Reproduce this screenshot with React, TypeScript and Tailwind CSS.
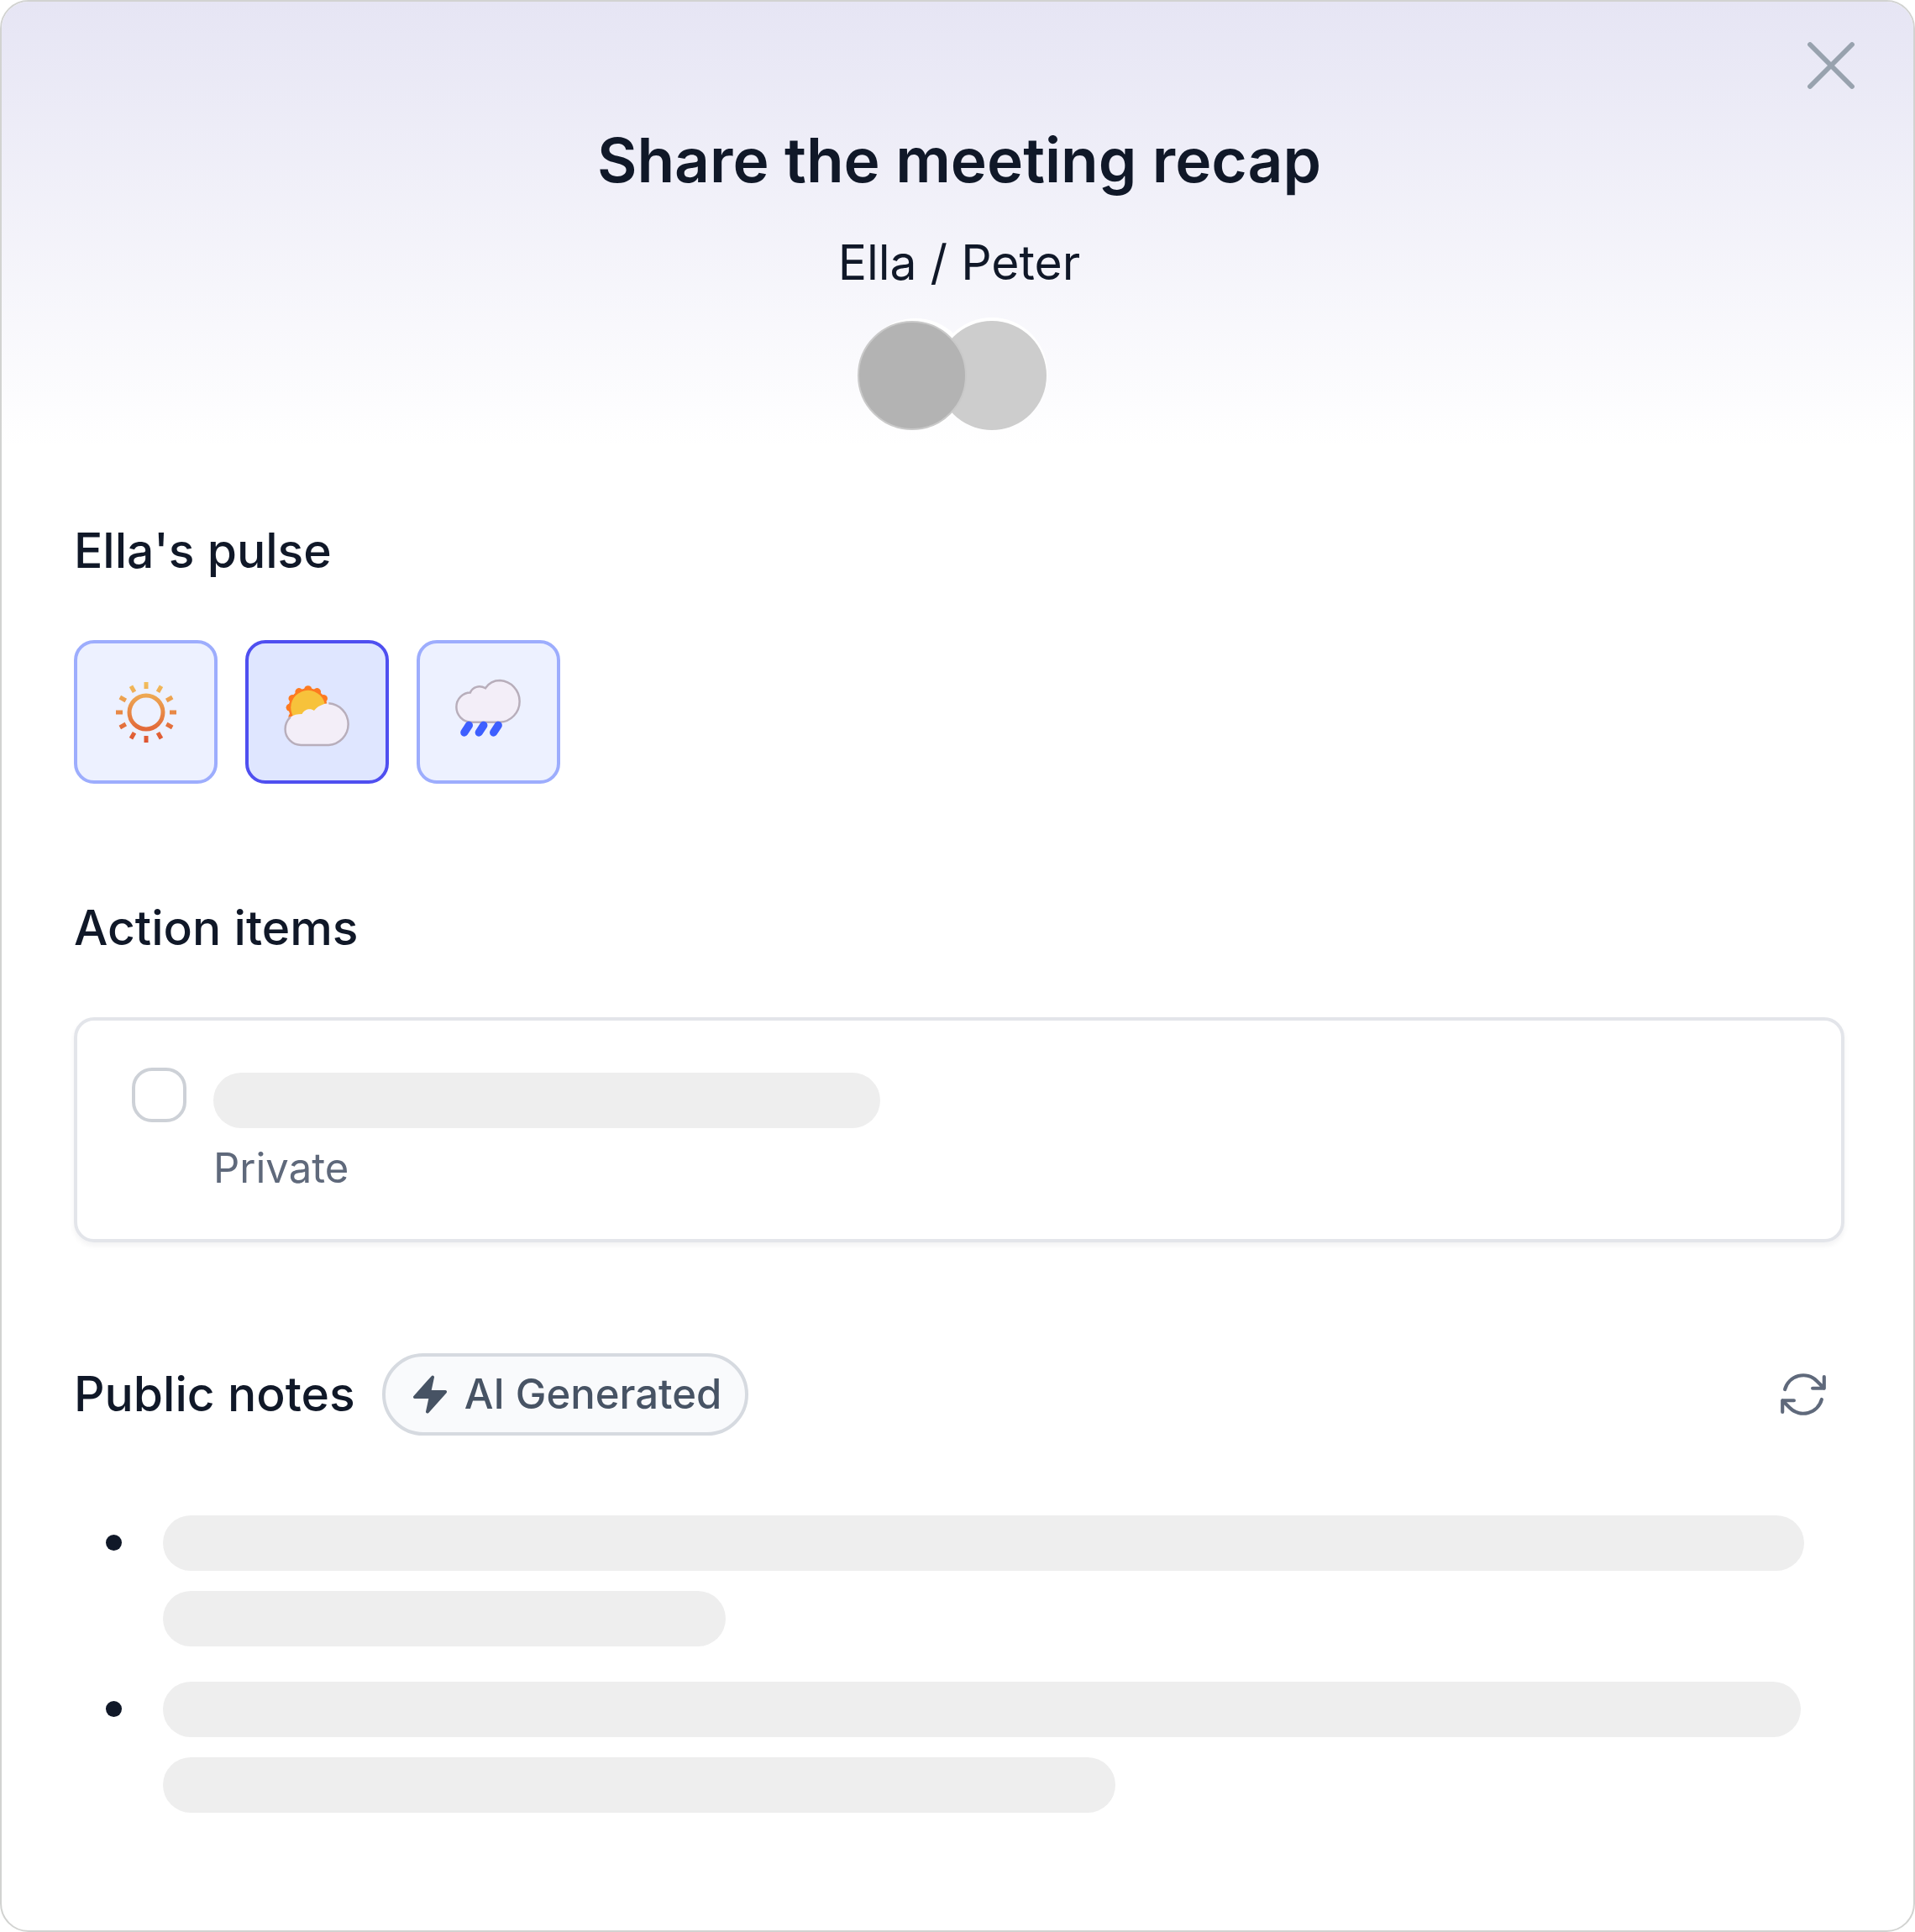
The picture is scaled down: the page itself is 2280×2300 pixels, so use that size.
import { useState } from "react";

type Pulse = "sunny" | "cloudy" | "rainy";

const rays = [0, 30, 60, 90, 120, 150, 180, 210, 240, 270, 300, 330];

const SunIcon = () => (
  <svg viewBox="0 0 80 80" className="size-20" fill="none" aria-hidden="true">
    <defs>
      <linearGradient id="sun" gradientUnits="userSpaceOnUse" x1="40" y1="4" x2="40" y2="76">
        <stop stopColor="#f2bf5c" />
        <stop offset="1" stopColor="#de5230" />
      </linearGradient>
    </defs>
    <circle cx="40" cy="40" r="20" stroke="url(#sun)" strokeWidth="5" />
    <path
      stroke="url(#sun)"
      strokeWidth="5"
      d="M40 4v8M58 8.8l-4 7M71.2 22l-7 4M76 40h-8M71.2 58l-7-4M58 71.2l-4-7M40 76v-8M22 71.2l4-7M8.8 58l7-4M4 40h8M8.8 22l7 4M22 8.8l4 7"
    />
  </svg>
);

const CloudSunIcon = () => (
  <svg viewBox="0 0 80 80" className="size-[82px]" fill="none" aria-hidden="true">
    <g fill="#fd7a20">
      <circle cx="29" cy="34.5" r="22.5" />
      {rays.map((a) => (
        <circle key={a} cx="29" cy="13.5" r="4.5" transform={`rotate(${a} 29 34.5)`} />
      ))}
    </g>
    <circle cx="29" cy="34.5" r="20" fill="#f7c23b" />
    <path
      fill="#f3eef8"
      d="M8.5 45.5C5 49 2.5 54.5 2.5 59.5A18.5 18.5 0 0 0 21 78H53a24.3 24.3 0 0 0 0-48.5C46 30 40 33 36 38 32 35 25 36 22 42 17 42 12 43 8.5 45.5Z"
    />
    <path
      stroke="#b8aebb"
      strokeWidth="2.4"
      d="M8.5 45.5C5 49 2.5 54.5 2.5 59.5A18.5 18.5 0 0 0 21 78H53a24.3 24.3 0 0 0 0-48.5"
    />
  </svg>
);

const RainIcon = () => (
  <svg viewBox="0 0 80 80" className="size-[82px]" fill="none" aria-hidden="true">
    <path
      fill="#f3eef8"
      stroke="#b8aebb"
      strokeWidth="2.4"
      d="M20.5 51.5C9 51.5 2.3 42.5 2.3 34 2.3 24 10 17 18.5 17 21 10.5 29 8 36 12 40 6 46 3 53 3a24.3 24.3 0 0 1 0 48.5Z"
    />
    <path
      stroke="#3d5fff"
      strokeWidth="9"
      strokeLinecap="round"
      d="M17 55l-5.5 8.5M34 55l-5.5 8.5M51 55l-5.5 8.5"
    />
  </svg>
);

const pulses = [
  { id: "sunny" as Pulse, label: "Sunny", Icon: SunIcon },
  { id: "cloudy" as Pulse, label: "Partly cloudy", Icon: CloudSunIcon },
  { id: "rainy" as Pulse, label: "Rainy", Icon: RainIcon },
];

// placeholder rows for the generated notes
const notes = [
  ["w-full", "w-[670px]"],
  ["w-[1950px]", "w-[1134px]"],
];

const Bar = ({ width }: { width: string }) => (
  <div className={`h-[66px] max-w-full rounded-full bg-[#eeeeee] ${width}`} />
);

const Avatars = () => (
  <svg viewBox="0 0 256 136" className="h-[136px] w-64" aria-hidden="true">
    <circle cx="76" cy="69" r="66" fill="#fff" />
    <circle cx="167" cy="68" r="66" fill="#fff" />
    <circle cx="167" cy="71" r="65" fill="#cdcdcd" />
    <circle cx="72" cy="71" r="64" fill="#b3b3b3" stroke="#c9c9c9" strokeWidth="2" />
  </svg>
);

export default function App() {
  const [pulse, setPulse] = useState<Pulse>("cloudy");
  const [done, setDone] = useState(false);

  return (
    <div className="bg-white font-['Inter',sans-serif] text-[#101828]">
      <main className="relative min-h-screen overflow-hidden rounded-[34px] border-2 border-[#d2d3d1]">
        <button
          type="button"
          aria-label="Close"
          className="absolute top-[26px] right-12 text-[#98a2ae]"
        >
          <svg
            viewBox="0 0 24 24"
            className="size-[100px]"
            fill="none"
            stroke="currentColor"
            strokeWidth="1.4"
            strokeLinecap="round"
            aria-hidden="true"
          >
            <path d="M6 18L18 6M6 6l12 12" />
          </svg>
        </button>

        <header className="flex flex-col items-center bg-linear-to-b from-[#e6e5f4] to-white pt-[139px] pr-[82px] pb-5 pl-[86px]">
          <h1 className="text-[73px] leading-[100px] font-semibold">Share the meeting recap</h1>
          <p className="mt-8 text-[57px] leading-[80px]">Ella / Peter</p>
          <div className="mt-[23px]">
            <Avatars />
          </div>
        </header>

        <div className="flex flex-col gap-[132px] pt-[84px] pr-[82px] pb-[138px] pl-[86px]">
          <section>
            <h2 className="text-[57px] leading-[80px] font-medium">Ella's pulse</h2>
            <div className="mt-[66px] flex gap-[33px]">
              {pulses.map(({ id, label, Icon }) => (
                <button
                  key={id}
                  type="button"
                  aria-label={label}
                  aria-pressed={pulse === id}
                  onClick={() => setPulse(id)}
                  className={`flex size-[171px] items-center justify-center rounded-3xl border-4 ${
                    pulse === id
                      ? "border-[#4f4ff0] bg-[#dfe6ff]"
                      : "border-[#9dadfd] bg-[#edf1ff]"
                  }`}
                >
                  <Icon />
                </button>
              ))}
            </div>
          </section>

          <section>
            <h2 className="text-[57px] leading-[80px] font-medium">Action items</h2>
            <div className="mt-[66px] flex items-start gap-8 rounded-3xl border-4 border-[#e3e5ea] px-[65px] pt-14 pb-12 shadow-[0_4px_6px_rgba(16,24,40,0.05)]">
              <input
                id="action-1"
                type="checkbox"
                checked={done}
                onChange={(e) => setDone(e.target.checked)}
                className="size-[65px] shrink-0 appearance-none rounded-3xl border-4 border-[#cdd1d7] bg-white checked:bg-[#4f4ff0]"
              />
              <div className="min-w-0 flex-1 pt-1.5">
                <Bar width="w-[794px]" />
                <label
                  htmlFor="action-1"
                  className="mt-3 block text-[49px] leading-[72px] text-[#5f697b]"
                >
                  Private
                </label>
              </div>
            </div>
          </section>

          <section>
            <div className="flex items-center">
              <h2 className="text-[57px] leading-[80px] font-medium">Public notes</h2>
              <span className="ml-8 flex h-[98px] items-center gap-4 rounded-full border-4 border-[#d6dae0] bg-[#f9fafc] px-7 text-[49px] leading-[72px] font-medium text-[#475364]">
                <svg viewBox="0 0 20 20" className="size-[50px]" fill="currentColor" aria-hidden="true">
                  <path d="M11.983 1.907a.75.75 0 0 0-1.292-.657l-8.5 9.5A.75.75 0 0 0 2.75 12h6.572l-1.305 6.093a.75.75 0 0 0 1.292.657l8.5-9.5A.75.75 0 0 0 17.25 8h-6.572l1.305-6.093Z" />
                </svg>
                AI Generated
              </span>
              <button
                type="button"
                aria-label="Regenerate notes"
                className="mr-4 ml-auto text-[#5f697b]"
              >
                <svg
                  viewBox="0 0 24 24"
                  className="size-[66px]"
                  fill="none"
                  stroke="currentColor"
                  strokeWidth="1.5"
                  strokeLinecap="round"
                  strokeLinejoin="round"
                  aria-hidden="true"
                >
                  <path d="M16.023 9.348h4.992v-.001M2.985 19.644v-4.992m0 0h4.992m-4.993 0l3.181 3.183a8.25 8.25 0 0 0 13.803-3.7M4.031 9.865a8.25 8.25 0 0 1 13.803-3.7l3.181 3.182m0-4.991v4.99" />
                </svg>
              </button>
            </div>

            <ul className="mt-[95px] flex flex-col gap-[42px] pr-12 pl-[38px]">
              {notes.map((rows, i) => (
                <li key={i} className="flex gap-[49px]">
                  <span className="mt-[23px] size-[19px] shrink-0 rounded-full bg-[#101828]" />
                  <div className="flex min-w-0 flex-1 flex-col gap-6">
                    {rows.map((w) => (
                      <Bar key={w} width={w} />
                    ))}
                  </div>
                </li>
              ))}
            </ul>
          </section>
        </div>
      </main>
    </div>
  );
}
